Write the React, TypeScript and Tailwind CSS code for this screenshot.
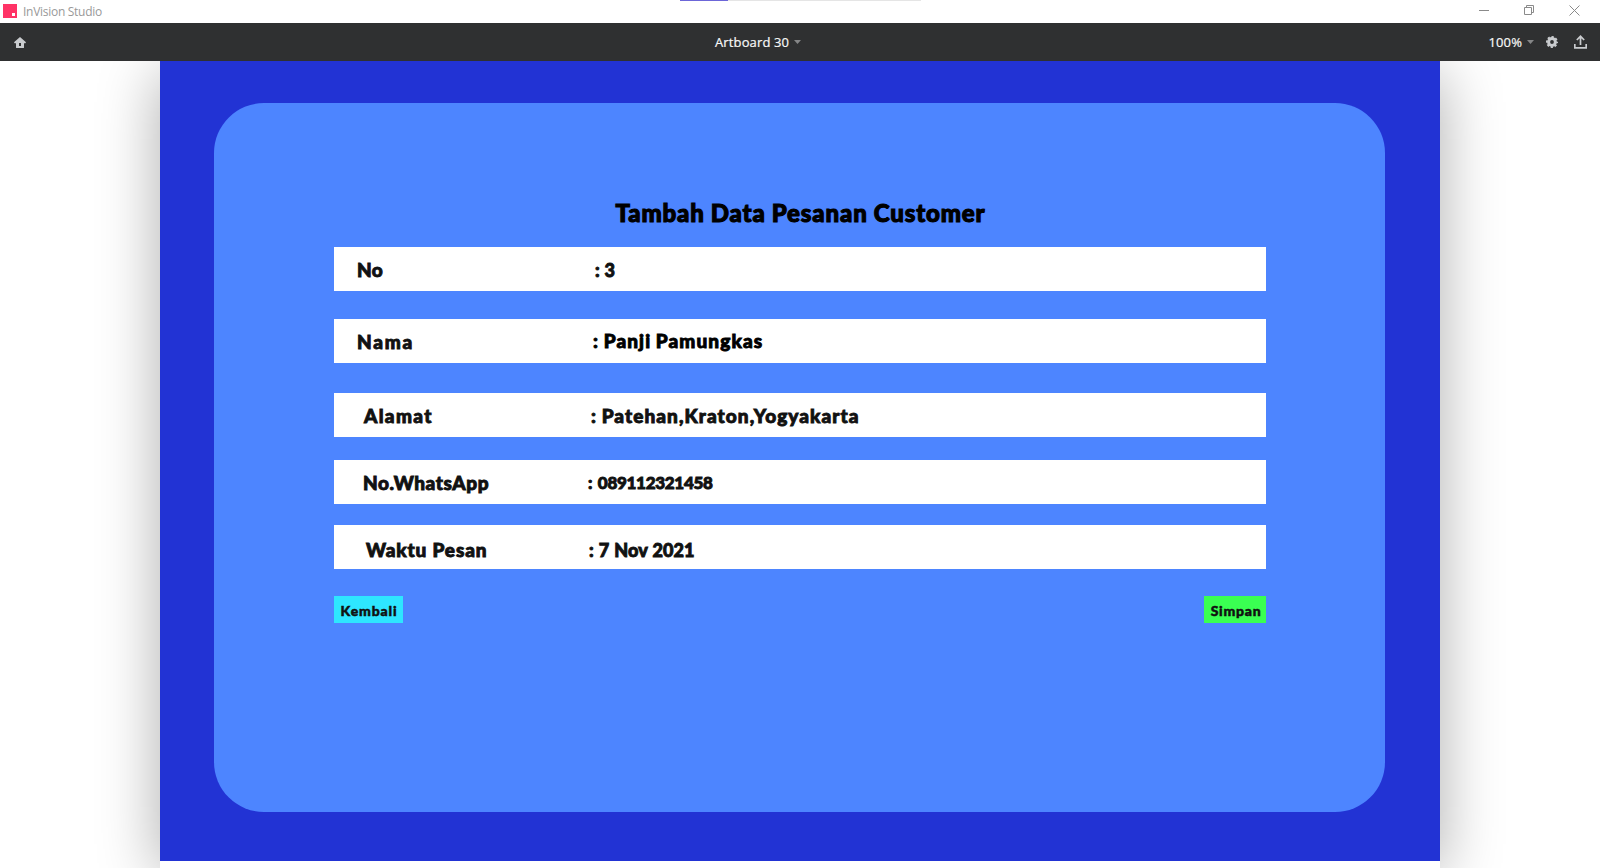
type Row = { label: string; value: string; box: string; labelClass: string; valueClass: string }

const rows: Row[] = [
  { label: 'No', value: ': 3', box: 'pt-px', labelClass: 'ml-[23px] w-[238px] tracking-[0.3px]', valueClass: 'text-[18px] tracking-[0.3px]' },
  { label: 'Nama', value: ': Panji Pamungkas', box: 'mt-7 pt-px', labelClass: 'ml-[23px] w-[236px] tracking-[1.8px]', valueClass: '-mt-px tracking-[1.1px] [word-spacing:-1px] text-black' },
  { label: 'Alamat', value: ': Patehan,Kraton,Yogyakarta', box: 'mt-[30px] pt-px', labelClass: 'ml-[30px] w-[227px] tracking-[1.35px]', valueClass: 'tracking-[1.08px] [word-spacing:-1px]' },
  { label: 'No.WhatsApp', value: ': 089112321458', box: 'mt-[23px] pt-px', labelClass: 'ml-[29px] w-[225px] tracking-[0.58px]', valueClass: 'text-[17px] tracking-[-0.3px] [word-spacing:2px]' },
  { label: 'Waktu Pesan', value: ': 7 Nov 2021', box: 'mt-[21px] pt-[3px]', labelClass: 'ml-[32px] w-[223px] tracking-[0.85px]', valueClass: 'text-[18px] tracking-[0.1px] [word-spacing:0.6px]' },
]

function Caret() {
  return (
    <svg width="7" height="4" viewBox="0 0 7 4" className="fill-[#858687]">
      <path d="M0 0h7L3.500 4z" />
    </svg>
  )
}

function TitleBar() {
  return (
    <header className="relative flex h-[23px] items-center bg-white pl-[3px] pr-5 text-[#999]">
      <div className="absolute left-[680px] top-0 flex h-px w-[241px] bg-[#e5e5e5]">
        <div className="w-12 bg-[#6c66d8]" />
      </div>
      <svg width="14" height="14" viewBox="0 0 14 14" className="-mt-px">
        <rect width="14" height="14" fill="#ff3366" />
        <rect x="9" y="9" width="3" height="3" fill="#fff" />
      </svg>
      <span className="ml-[6px] mt-px font-['Open_Sans',sans-serif] text-[12px] leading-none tracking-[-0.28px]">InVision Studio</span>
      <div className="ml-auto flex items-center gap-[35px]">
        <svg width="10" height="10" viewBox="0 0 10 10" fill="none" stroke="#8a8a8a" className="-mt-[3px]">
          <path d="M0 5.500h10" />
        </svg>
        <svg width="10" height="10" viewBox="0 0 10 10" fill="none" stroke="#8a8a8a" className="-mt-[3px]">
          <path d="M0.500 2.500h7v7h-7zM2.500 2.500v-2h7v7h-2" />
        </svg>
        <svg width="11" height="11" viewBox="0 0 11 11" fill="none" stroke="#8a8a8a" className="-mt-[3px]">
          <path d="M0.500 0.500l10 10M10.500 0.500l-10 10" />
        </svg>
      </div>
    </header>
  )
}

function Toolbar() {
  return (
    <nav className="grid h-[38px] grid-cols-[715px_1fr_auto] items-center bg-[#2f3031] pr-[13px] font-['Open_Sans',sans-serif] text-[13px] leading-none text-[#f8f8f8]">
      <svg width="12" height="11" viewBox="0 0 12 11" className="ml-[14px]" fill="#c9cbce">
        <path fillRule="evenodd" d="M6 0l6 5.200-.6 1H10V10.500q0 .5-.5.5h-7q-.5 0-.5-.5V6.200H.6L0 5.200zM5 6v3h2V6z" />
      </svg>
      <div className="flex items-center gap-[5px]">
        <span className="tracking-[0.13px] [-webkit-text-stroke:0.2px]">Artboard 30</span>
        <Caret />
      </div>
      <div className="flex items-center">
        <span className="mr-[5px] tracking-[0.1px] [-webkit-text-stroke:0.2px]">100%</span>
        <Caret />
        <svg width="12" height="12" viewBox="0 0 12 12" className="ml-[12px]" fill="none" stroke="#c9cbce">
          <circle cx="6" cy="6" r="3.400" strokeWidth="3" />
          <circle cx="6" cy="6" r="5.100" strokeWidth="1.800" strokeDasharray="2.200 1.805" strokeDashoffset="1.100" />
        </svg>
        <svg width="13" height="14" viewBox="0 0 13 14" className="ml-[16px]" fill="none" stroke="#c9cbce" strokeWidth="1.700">
          <path d="M2.800 5L6.500 1.300 10.200 5M6.500 1.500v8.500" />
          <path d="M0.800 9v3.900h11.400V9" />
        </svg>
      </div>
    </nav>
  )
}

export default function App() {
  return (
    <div className="flex h-[868px] w-[1600px] flex-col overflow-hidden bg-white">
      <TitleBar />
      <Toolbar />
      <div className="flex flex-1 flex-col items-center overflow-hidden">
        <main className="h-[800px] w-[1280px] shrink-0 bg-[#2233d4] pl-[54px] pt-[42px] shadow-[0_12px_58px_rgba(0,0,0,0.33)]">
          <section className="h-[709px] w-[1171px] rounded-[50px] bg-[#4d85ff] px-[120px] pt-[95px] font-[Lato,sans-serif] font-black text-[#111] [-webkit-text-stroke:0.9px]">
            <h1 className="ml-[2px] text-center text-[24px] leading-[30px] tracking-[0.88px] text-black [word-spacing:-0.6px] [-webkit-text-stroke:1.1px]">Tambah Data Pesanan Customer</h1>
            <div className="mt-[19px] w-[932px]">
              {rows.map((r) => (
                <div key={r.label} className={`flex h-11 bg-white text-[19px] leading-[44px] whitespace-nowrap ${r.box}`}>
                  <span className={`shrink-0 ${r.labelClass}`}>{r.label}</span>
                  <span className={r.valueClass}>{r.value}</span>
                </div>
              ))}
            </div>
            <div className="mt-[27px] flex w-[932px] justify-between text-[14px] leading-[27px] [-webkit-text-stroke:0.5px]">
              <button className="h-[27px] w-[69px] bg-[#2ee6ff] pt-px pl-px tracking-[0.85px]">Kembali</button>
              <button className="h-[27px] w-[62px] bg-[#3aff52] pt-px pl-[2px] tracking-[0.75px]">Simpan</button>
            </div>
          </section>
        </main>
        <div className="relative w-[1280px] flex-1 bg-white" />
      </div>
    </div>
  )
}
